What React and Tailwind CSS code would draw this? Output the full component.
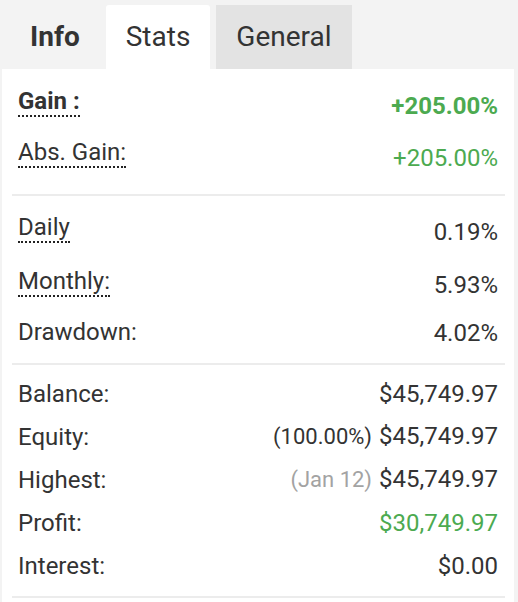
const tabs = [
    { name: "Info", cls: "font-bold" },
    { name: "Stats", cls: "bg-white rounded-t-[3px]" },
    { name: "General", cls: "bg-[#e3e3e3]" },
];

const Label = ({ children, dotted, bold }) => (
    <span
        className={
            (dotted ? "border-b-2 border-dotted border-[#222] " : "") +
            (bold ? "font-bold" : "")
        }
    >
        {children}
    </span>
);

const Separator = () => <div className="ml-[10px] mr-[9px] h-[2px] bg-[#ececec]" />;

const money = [
    { label: "Balance:", value: "$45,749.97" },
    { label: "Equity:", note: "(100.00%)", noteCls: "text-[#333]", value: "$45,749.97" },
    { label: "Highest:", note: "(Jan 12)", noteCls: "text-[#a3a3a3]", value: "$45,749.97" },
    { label: "Profit:", value: "$30,749.97", valueCls: "text-[#4caa50]" },
    { label: "Interest:", value: "$0.00" },
];

export default function App() {
    return (
        <div className="min-h-[602px] w-[518px] bg-[#f3f3f3] pt-[5px] text-[#333] font-['Roboto',sans-serif]">
            <div className="flex h-[64px] gap-[6px] pl-[10px]">
                {tabs.map((t) => (
                    <div key={t.name} className={"flex items-center px-[20px] text-[28px] " + t.cls}>
                        {t.name}
                    </div>
                ))}
            </div>

            <div className="ml-[2px] w-[512px] bg-white pb-[4px] text-[24px] leading-[28px]">
                <div className="px-[16px]">
                    <div className="flex h-[51px] items-start justify-between">
                        <div className="mt-[18px]"><Label dotted bold>Gain :</Label></div>
                        <div className="mt-[23px] font-bold text-[#4caa50]">+205.00%</div>
                    </div>
                    <div className="flex h-[74px] items-start justify-between">
                        <div className="mt-[18px]"><Label dotted>Abs. Gain:</Label></div>
                        <div className="mt-[24px] text-[#4caa50]">+205.00%</div>
                    </div>
                </div>
                <Separator />

                <div className="px-[16px]">
                    <div className="flex h-[54px] items-start justify-between">
                        <div className="mt-[17px]"><Label dotted>Daily</Label></div>
                        <div className="mt-[22px]">0.19%</div>
                    </div>
                    <div className="flex h-[51px] items-start justify-between">
                        <div className="mt-[17px]"><Label dotted>Monthly:</Label></div>
                        <div className="mt-[21px]">5.93%</div>
                    </div>
                    <div className="flex h-[62px] items-start justify-between">
                        <div className="mt-[17px]">Drawdown:</div>
                        <div className="mt-[18px]">4.02%</div>
                    </div>
                </div>
                <Separator />

                <div className="px-[16px] pt-[7px] pb-[9px]">
                    {money.map((r) => (
                        <div key={r.label} className="flex h-[43px] items-center justify-between">
                            <div>{r.label}</div>
                            <div className="flex items-baseline gap-[7px]">
                                {r.note && <span className={"text-[22px] " + r.noteCls}>{r.note}</span>}
                                <span className={r.valueCls}>{r.value}</span>
                            </div>
                        </div>
                    ))}
                </div>
                <Separator />
            </div>
        </div>
    );
}
